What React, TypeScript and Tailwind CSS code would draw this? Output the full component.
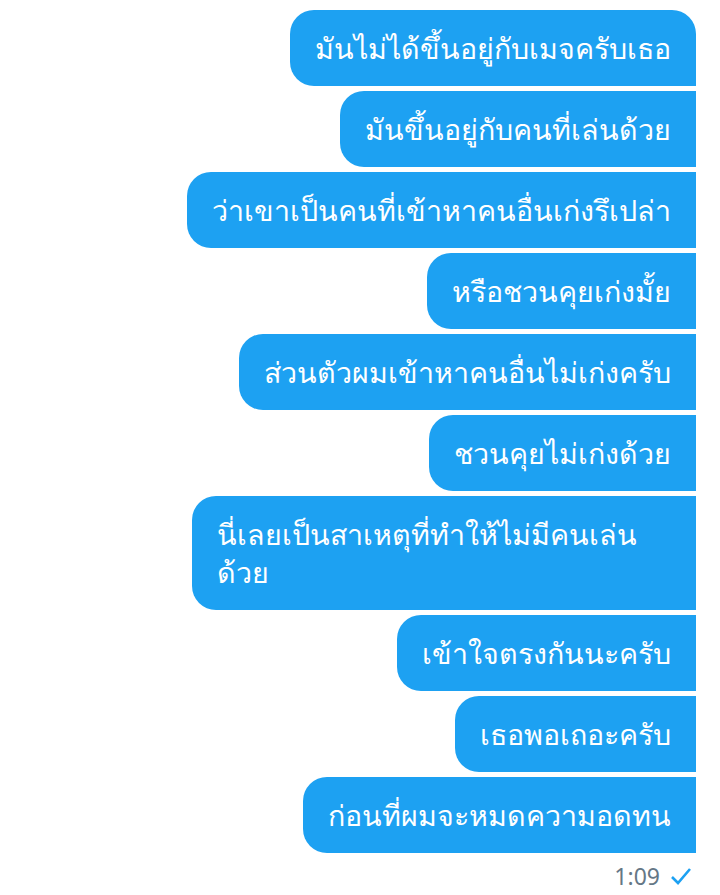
import React from "react";

const msgs: React.ReactNode[] = [
  "มันไม่ได้ขึ้นอยู่กับเมจครับเธอ",
  "มันขึ้นอยู่กับคนที่เล่นด้วย",
  "ว่าเขาเป็นคนที่เข้าหาคนอื่นเก่งรึเปล่า",
  "หรือชวนคุยเก่งมั้ย",
  "ส่วนตัวผมเข้าหาคนอื่นไม่เก่งครับ",
  "ชวนคุยไม่เก่งด้วย",
  <>
    นี่เลยเป็นสาเหตุที่ทำให้ไม่มีคนเล่น
    <br />
    ด้วย
  </>,
  "เข้าใจตรงกันนะครับ",
  "เธอพอเถอะครับ",
  "ก่อนที่ผมจะหมดความอดทน",
];

export default function App() {
  return (
    <div
      className="w-[720px] h-[895px] bg-white pt-[10px] pr-[24px] flex flex-col items-end"
      style={{ fontFamily: '"Noto Sans", "DejaVu Sans", sans-serif' }}
    >
      <div className="flex flex-col items-end gap-[5px]">
        {msgs.map((m, i) => (
          <div
            key={i}
            className={
              "bg-[#1da1f2] text-white text-[28.6px] leading-[38px] px-[25px] py-[19px] whitespace-nowrap rounded-l-[24px] " +
              (i === 6 ? "min-w-[504px] " : "") +
              (i === 0 ? "rounded-tr-[24px]" : "")
            }
          >
            {m}
          </div>
        ))}
      </div>
      <div className="mt-[8px] flex items-center gap-[10px] pr-[4px]">
        <span className="text-[23px] leading-[30px] text-[#657786]">1:09</span>
        <svg width="22" height="18" viewBox="0 0 22 18">
          <path d="M2 10 L8 16 L20 2" fill="none" stroke="#1da1f2" strokeWidth="2.6" />
        </svg>
      </div>
    </div>
  );
}
